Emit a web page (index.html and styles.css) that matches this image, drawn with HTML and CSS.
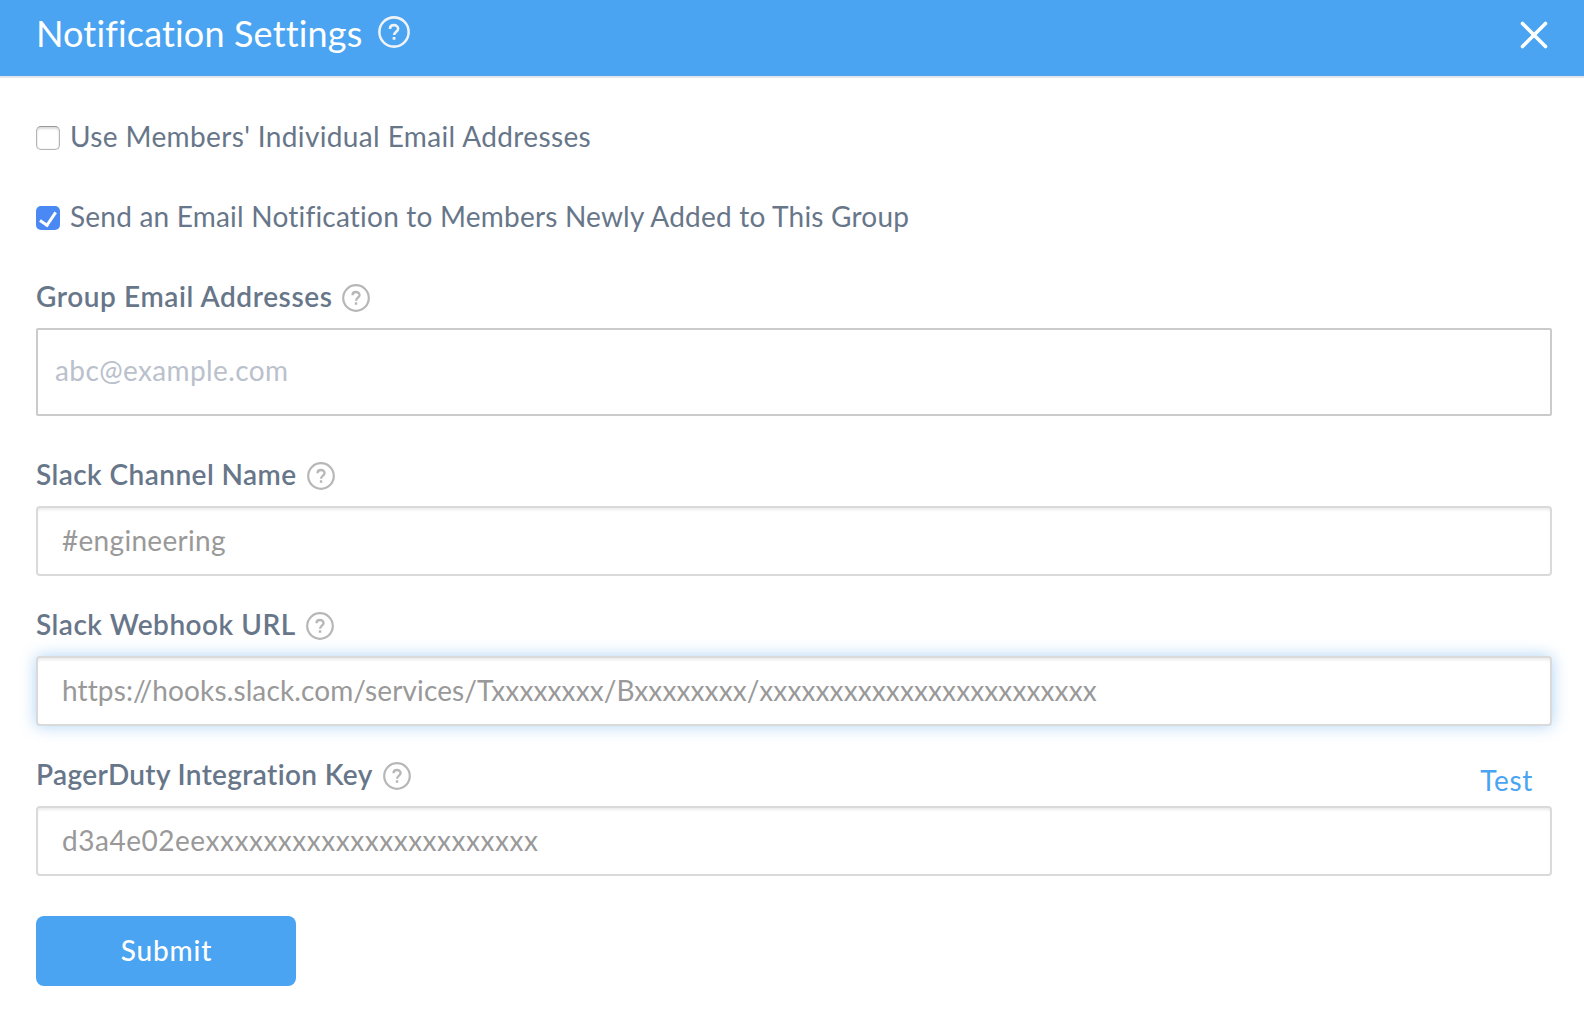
FILE: index.html
```html
<!DOCTYPE html>
<html lang="en">
<head>
<meta charset="utf-8">
<title>Notification Settings</title>
<link rel="stylesheet" href="styles.css">
</head>
<body>
<svg class="sprite" aria-hidden="true">
  <symbol id="help" viewBox="0 0 28 28">
    <circle cx="14" cy="14" r="12.8" fill="none" stroke="currentColor" stroke-width="2.2"/>
    <path d="M10.5 11.3C10.5 9.2 12 8 14 8s3.6 1.3 3.6 3.1c0 2.5-3.5 2.8-3.5 5.6" fill="none" stroke="currentColor" stroke-width="2.3"/>
    <rect x="12.8" y="18.3" width="2.5" height="2.5" rx=".4" fill="currentColor"/>
  </symbol>
</svg>
<header class="header">
  <h1 class="title">Notification Settings</h1>
  <svg class="help help-header"><use href="#help"/></svg>
  <button class="close" type="button" aria-label="Close">
    <svg width="28" height="28" viewBox="0 0 28 28"><path d="M2.5 2.5l23 23M25.5 2.5l-23 23" stroke="#fff" stroke-width="3.6" stroke-linecap="round"/></svg>
  </button>
</header>
<form class="form">
  <label class="check">
    <input class="box" type="checkbox">
    <span class="check-text members">Use Members' Individual Email Addresses</span>
  </label>
  <label class="check">
    <input class="box" type="checkbox" checked>
    <span class="check-text newly">Send an Email Notification to Members Newly Added to This Group</span>
  </label>
  <div class="field field-email">
    <div class="label-row"><label class="label label-email" for="email">Group Email Addresses</label><svg class="help"><use href="#help"/></svg></div>
    <input class="input input-email" id="email" placeholder="abc@example.com">
  </div>
  <div class="field">
    <div class="label-row"><label class="label label-channel" for="channel">Slack Channel Name</label><svg class="help"><use href="#help"/></svg></div>
    <input class="input input-channel" id="channel" placeholder="#engineering">
  </div>
  <div class="field">
    <div class="label-row"><label class="label label-hook" for="hook">Slack Webhook URL</label><svg class="help"><use href="#help"/></svg></div>
    <input class="input input-hook" id="hook" placeholder="https://hooks.slack.com/services/Txxxxxxxx/Bxxxxxxxx/xxxxxxxxxxxxxxxxxxxxxxxx">
  </div>
  <div class="field">
    <div class="label-row"><label class="label label-key" for="key">PagerDuty Integration Key</label><svg class="help"><use href="#help"/></svg><a class="test">Test</a></div>
    <input class="input input-key" id="key" placeholder="d3a4e02eexxxxxxxxxxxxxxxxxxxxxxx">
  </div>
  <button class="submit" type="button">Submit</button>
</form>
</body>
</html>
```
FILE: styles.css
```css
* { box-sizing: border-box; }

body {
  margin: 0;
  background: #fff;
  color: #677689;
  font: 400 28px/40px Lato, "Liberation Sans", sans-serif;
}

.sprite { display: none; }

.header {
  display: flex;
  align-items: center;
  height: 78px;
  padding: 0 36px 8px;
  background: #4aa4f1;
  border-bottom: 2px solid #e4e5ea;
  color: #fff;
}

.title {
  margin: 0 0 2px;
  font-size: 36px;
  font-weight: 400;
  line-height: 44px;
  letter-spacing: .16px;
}

.help {
  flex: none;
  width: 28px;
  height: 28px;
  margin: 6px 0 0 10px;
  color: #b7b7b7;
}

.help-header {
  width: 32px;
  height: 32px;
  margin: 0 0 4px 16px;
  color: #f0f2f5;
}

.close {
  display: flex;
  margin: 2px 0 0 auto;
  padding: 0;
  border: 0;
  background: none;
}

.form { padding: 37px 32px 0 36px; }

.check {
  display: flex;
  align-items: center;
  height: 40px;
  margin-bottom: 40px;
}

.box {
  appearance: none;
  display: grid;
  place-items: center;
  width: 24px;
  height: 24px;
  margin: 6px 10px 0 0;
  border: 1px solid #b4b4b4;
  border-top-color: #999;
  border-radius: 5px;
  background: #fff;
  box-shadow: inset 0 2px 2px #ddd, inset 0 0 1px #aaa;
}

.box:checked {
  border: 0;
  background: #4a89f4;
  box-shadow: none;
}

.box:checked::before {
  content: "";
  width: 7px;
  height: 14px;
  margin: -2px 0 0 0;
  border: solid #fff;
  border-width: 0 3px 3px 0;
  transform: rotate(34deg);
}

.check-text { margin-top: 2px; }
.members { letter-spacing: .37px; }
.newly { letter-spacing: .21px; }

.field { margin-bottom: 27px; }
.field-email { margin-bottom: 37px; }

.label-row {
  display: flex;
  align-items: center;
  height: 40px;
  margin-bottom: 13px;
}

.label { margin-top: 2px; font-weight: 600; }
.label-email { margin-right: -1px; letter-spacing: .59px; }
.label-channel { letter-spacing: .44px; }
.label-hook { letter-spacing: .5px; }
.label-key { letter-spacing: .35px; }

.test {
  margin: 14px 19px 0 auto;
  color: #4aa4f1;
  letter-spacing: .7px;
}

.input {
  display: block;
  width: 100%;
  height: 70px;
  padding: 0 24px 2px;
  border: 2px solid #dadada;
  border-radius: 4px;
  outline: 0;
  background: #fff;
  box-shadow: inset 0 3px 3px -1px #ececec;
  font: inherit;
  letter-spacing: .12px;
}

.input::placeholder { color: #999; opacity: 1; }

.input-email {
  height: 88px;
  padding: 0 17px 4px;
  border-color: #cbcbcb;
  border-radius: 2px;
  box-shadow: none;
  letter-spacing: .39px;
}

.input-email::placeholder { color: #bac1cc; }

.input-channel { letter-spacing: .3px; }

.input-hook {
  box-shadow: inset 0 3px 3px -1px #ececec, 0 0 16px rgba(74, 157, 230, .45);
}

.input-key { letter-spacing: .53px; }

.submit {
  display: block;
  width: 260px;
  height: 70px;
  margin-top: 40px;
  padding: 0 0 2px 1px;
  border: 0;
  border-radius: 8px;
  background: #4aa4f1;
  color: #fff;
  font: inherit;
  font-weight: 500;
  letter-spacing: .85px;
}
```
